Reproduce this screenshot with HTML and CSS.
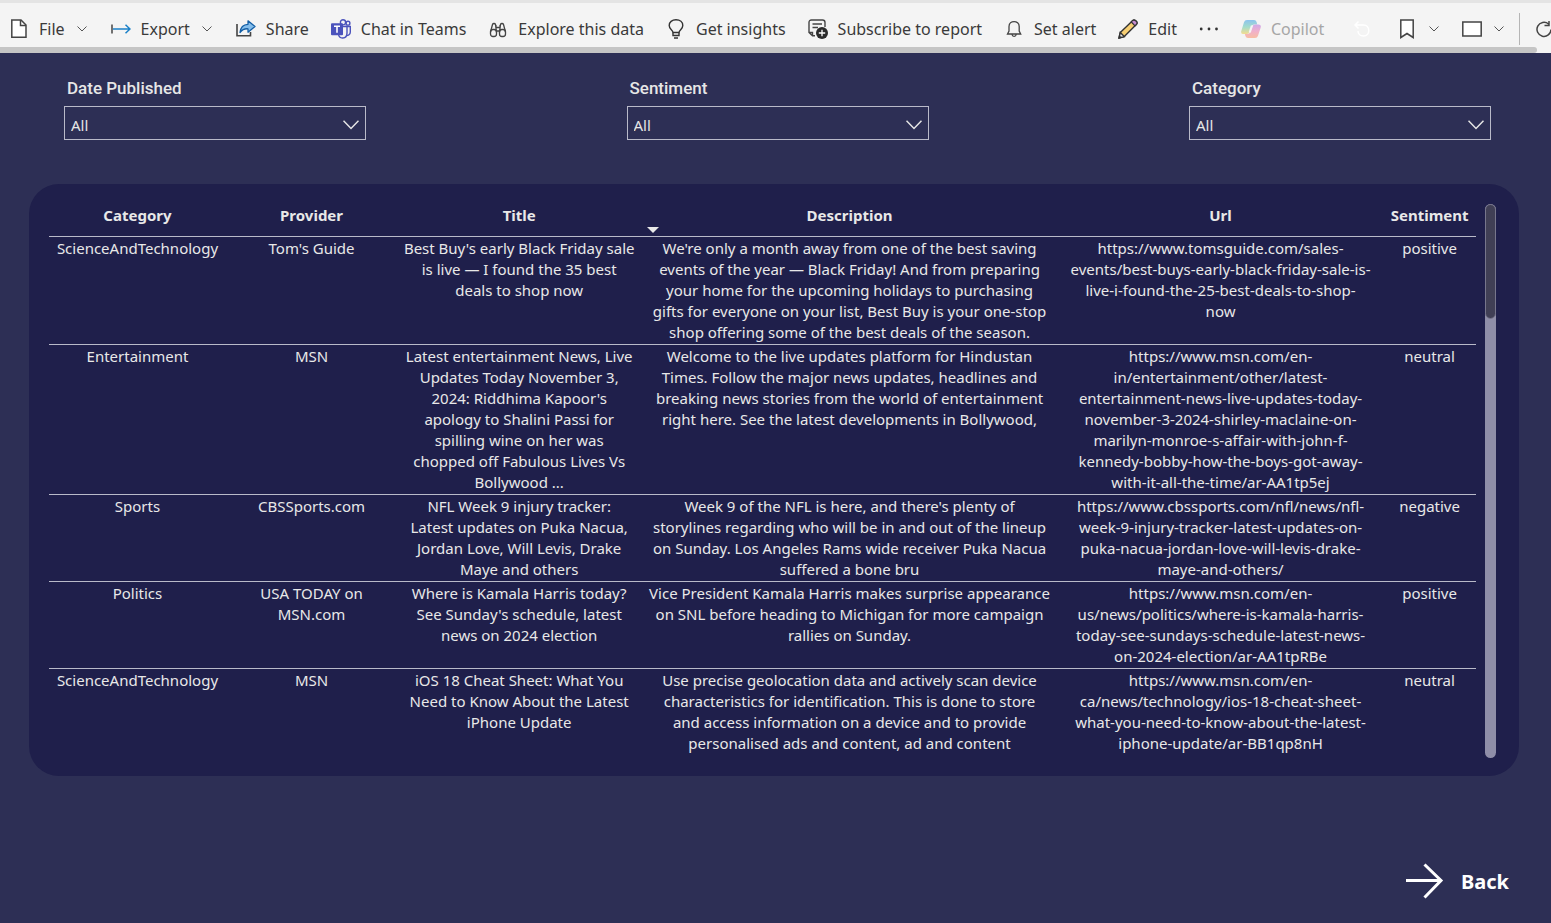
FILE: index.html
```html
<!DOCTYPE html>
<html lang="en">
<head>
<meta charset="utf-8">
<title>News report</title>
<link rel="stylesheet" href="styles.css">
</head>
<body>
<header class="toolbar">
  <nav class="actions" aria-label="Report actions">
    <button class="action menu" type="button">
      <svg class="icon" viewBox="0 0 20 20"><path d="M2.8 1h9.2l5 5v12.200H2.800z" fill="#fff" stroke="#444" stroke-width="1.500"/><path d="M11.500 1v5.500H17" fill="none" stroke="#444" stroke-width="1.500"/></svg>
      <span>File</span>
      <svg class="chev" viewBox="0 0 10 6"><path d="M.5.5 5 5 9.500.5"/></svg>
    </button>
    <button class="action menu" type="button">
      <svg class="icon" viewBox="0 0 20 20"><path d="M1 5.500v9" stroke="#444" stroke-width="1.500"/><path d="M2 10h17M14.500 5.700 19 10l-4.500 4.300" fill="none" stroke="#1a80c8" stroke-width="1.500"/></svg>
      <span>Export</span>
      <svg class="chev" viewBox="0 0 10 6"><path d="M.5.5 5 5 9.500.5"/></svg>
    </button>
    <button class="action" type="button">
      <svg class="icon" viewBox="0 0 20 20"><path d="M1 5v11.800h13.500V13" fill="none" stroke="#444" stroke-width="1.600"/><path d="M4 13.500C4.500 8.500 7.500 5.500 12 5.300V1.800l7 5.700-7 5.700V9.800C8.500 9.500 6 10.800 4 13.500z" fill="#84bdeb" stroke="#145fa6" stroke-width="1.300" stroke-linejoin="round"/></svg>
      <span>Share</span>
    </button>
    <button class="action" type="button">
      <svg class="icon" viewBox="0 0 20 20"><g fill="#f4f4f4" stroke="#4b53bc" stroke-width="1.400"><circle cx="17" cy="4.200" r="1.900"/><path d="M14 7.500h5.300v5.500c0 2.500-2 3.800-4.300 3.500"/><circle cx="12" cy="3.300" r="2.600"/><path d="M8 7.500h8v6.500c0 6.500-8 6.500-8.500 1z"/></g><rect y="4.200" width="12" height="12" rx="1" fill="#4b53bc"/><path d="M3 7.200h6M6 7.200v6.600" stroke="#fff" stroke-width="1.600"/></svg>
      <span>Chat in Teams</span>
    </button>
    <button class="action" type="button">
      <svg class="icon" viewBox="0 0 20 20" fill="none" stroke="#444" stroke-width="1.300"><rect x="2.500" y="10.500" width="6" height="7" rx="2.500"/><rect x="11.500" y="10.500" width="6" height="7" rx="2.500"/><path d="M2.500 13 4.500 5.500q.3-1 1.500-1t1.500 1l1 8M17.500 13l-2-7.500q-.3-1-1.500-1t-1.500 1l-1 8M8 8.500h4M8.500 12h3M8 6v5M12 6v5"/></svg>
      <span>Explore this data</span>
    </button>
    <button class="action" type="button">
      <svg class="icon" viewBox="0 0 20 20" fill="none" stroke="#333" stroke-width="1.400"><path d="M7 13.500C6.800 11 3.200 10 3.200 6.500 3.200 3 6 .8 10 .8s6.800 2.200 6.800 5.700c0 3.500-3.600 4.500-3.800 7z"/><path d="M7 13.500v3h6v-3M8 19h4"/></svg>
      <span>Get insights</span>
    </button>
    <button class="action" type="button">
      <svg class="icon" viewBox="0 0 20 20"><path d="M7 16.800H4.500L1 13.500V3.500q0-2.500 2.500-2.500h11Q17 1 17 3.500V8M4.500 17v-3.500H1M4.500 5H14M4.500 8.500H10" fill="none" stroke="#444" stroke-width="1.400"/><circle cx="14" cy="14" r="6" fill="#2b2b2b"/><path d="M14 10.800v6.400M10.800 14h6.400" stroke="#fff" stroke-width="1.300"/></svg>
      <span>Subscribe to report</span>
    </button>
    <button class="action" type="button">
      <svg class="icon" viewBox="0 0 20 20" fill="none" stroke="#444" stroke-width="1.300"><path d="M3.500 15h13.200l-1.500-3V7.500c0-6.500-10.200-6.500-10.200 0V12zM8 15.500c.3 2.500 3.900 2.500 4.200 0"/></svg>
      <span>Set alert</span>
    </button>
    <button class="action" type="button">
      <svg class="icon" viewBox="0 0 20 20"><path d="M1 19l1.300-5.500L14.500 1.700q1.500-1.500 3.500.3t.3 3.500L6.300 17.600z" fill="#f7cf73" stroke="#333" stroke-width="1.400" stroke-linejoin="round"/><path d="M13.300 2.900 14.500 1.700q1.500-1.500 3.500.3t.3 3.500L17 6.800z" fill="#c58bd0" stroke="#333" stroke-width="1.200"/><path d="M1 19l1.300-5.500 4 4.100z" fill="#e8e8e8" stroke="#333" stroke-width="1.400"/><path d="M1 19l.6-2.500 1.800 1.800z" fill="#333"/></svg>
      <span>Edit</span>
    </button>
    <button class="action more" type="button" aria-label="More options">
      <svg class="icon" viewBox="0 0 20 20" fill="#333"><circle cx="2.200" cy="10" r="1.400"/><circle cx="10" cy="10" r="1.400"/><circle cx="17.500" cy="10" r="1.400"/></svg>
    </button>
    <button class="action" type="button" disabled>
      <svg class="icon" viewBox="0 0 20 20"><defs><linearGradient id="cool" x1="0" y1="0" x2="0" y2="1"><stop offset="0" stop-color="#8cc3ee"/><stop offset=".5" stop-color="#a3dccb"/><stop offset="1" stop-color="#f4dc8f"/></linearGradient><linearGradient id="warm" x1="0" y1="0" x2="0" y2="1"><stop offset="0" stop-color="#cfa9ea"/><stop offset=".5" stop-color="#f0b0cb"/><stop offset="1" stop-color="#f8bda3"/></linearGradient></defs><path d="M6 1h7q2 0 2.600 2l.6 2.500h-3q-2 0-2.700 2L8.500 13q-.6 2-2.500 2H2.500Q-.5 15 .3 12L3 3.200Q3.700 1 6 1z" fill="url(#cool)"/><path d="M14 19H7q-2 0-2.600-2l-.5-2H6.500q2 0 2.700-2L11.500 7.500q.6-2 2.500-2h3.500q3 0 2.200 3L17 16.800Q16.300 19 14 19z" fill="url(#warm)"/><path d="M11 6.500 8.700 13.500" stroke="#f4f4f4" stroke-width="2.200"/></svg>
      <span>Copilot</span>
    </button>
  </nav>
  <div class="view-tools">
    <button class="action reset" type="button" aria-label="Reset" disabled>
      <svg class="icon" viewBox="0 0 20 20" fill="none" stroke="#fff" stroke-width="1.500"><path d="M3 6h8.500c7 0 7 11 0 11-3.500 0-5.500-2.500-5.500-5M6.500 2.500 3 6l3.500 3.500"/></svg>
    </button>
    <button class="action menu" type="button" aria-label="Bookmarks">
      <svg class="icon" viewBox="0 0 20 20"><path d="M3.800 1h12.400v17.500L10 14.500l-6.200 4z" fill="#fff" stroke="#444" stroke-width="1.500"/></svg>
      <svg class="chev" viewBox="0 0 10 6"><path d="M.5.5 5 5 9.500.5"/></svg>
    </button>
    <button class="action menu" type="button" aria-label="View">
      <svg class="icon" viewBox="0 0 20 20"><path d="M.8 3h18.400v14H.8z" fill="#fff" stroke="#444" stroke-width="1.500"/></svg>
      <svg class="chev" viewBox="0 0 10 6"><path d="M.5.5 5 5 9.500.5"/></svg>
    </button>
    <span class="divider"></span>
    <button class="action" type="button" aria-label="Refresh">
      <svg class="icon" viewBox="0 0 20 20" fill="none" stroke="#444" stroke-width="1.500"><path d="M13.500 5A7 7 0 1 0 16 10.500M14 2v4.500H9.500"/></svg>
    </button>
  </div>
</header>
<div class="toolbar-scroll"><div class="toolbar-thumb"></div></div>

<main class="report">
  <form class="filters">
    <div class="filter">
      <label for="date">Date Published</label>
      <div class="picker"><select id="date"><option>All</option></select><svg viewBox="0 0 16 10"><path d="M.5.8 8 8.500 15.500.8"/></svg></div>
    </div>
    <div class="filter">
      <label for="sentiment">Sentiment</label>
      <div class="picker"><select id="sentiment"><option>All</option></select><svg viewBox="0 0 16 10"><path d="M.5.8 8 8.500 15.500.8"/></svg></div>
    </div>
    <div class="filter">
      <label for="category">Category</label>
      <div class="picker"><select id="category"><option>All</option></select><svg viewBox="0 0 16 10"><path d="M.5.8 8 8.500 15.500.8"/></svg></div>
    </div>
  </form>

  <section class="panel">
    <table class="news">
      <colgroup><col class="c-category"><col class="c-provider"><col class="c-title"><col class="c-description"><col class="c-url"><col class="c-sentiment"></colgroup>
      <thead>
        <tr><th>Category</th><th>Provider</th><th>Title</th><th class="sorted">Description</th><th>Url</th><th>Sentiment</th></tr>
      </thead>
      <tbody>
        <tr>
          <td>ScienceAndTechnology</td><td>Tom's Guide</td>
          <td>Best Buy's early Black Friday sale<br>is live — I found the 35 best<br>deals to shop now</td>
          <td>We're only a month away from one of the best saving<br>events of the year — Black Friday! And from preparing<br>your home for the upcoming holidays to purchasing<br>gifts for everyone on your list, Best Buy is your one-stop<br>shop offering some of the best deals of the season.</td>
          <td>https://www.tomsguide.com/sales-<br>events/best-buys-early-black-friday-sale-is-<br>live-i-found-the-25-best-deals-to-shop-<br>now</td>
          <td>positive</td>
        </tr>
        <tr>
          <td>Entertainment</td><td>MSN</td>
          <td>Latest entertainment News, Live<br>Updates Today November 3,<br>2024: Riddhima Kapoor's<br>apology to Shalini Passi for<br>spilling wine on her was<br>chopped off Fabulous Lives Vs<br>Bollywood ...</td>
          <td>Welcome to the live updates platform for Hindustan<br>Times. Follow the major news updates, headlines and<br>breaking news stories from the world of entertainment<br>right here. See the latest developments in Bollywood,</td>
          <td>https://www.msn.com/en-<br>in/entertainment/other/latest-<br>entertainment-news-live-updates-today-<br>november-3-2024-shirley-maclaine-on-<br>marilyn-monroe-s-affair-with-john-f-<br>kennedy-bobby-how-the-boys-got-away-<br>with-it-all-the-time/ar-AA1tp5ej</td>
          <td>neutral</td>
        </tr>
        <tr>
          <td>Sports</td><td>CBSSports.com</td>
          <td>NFL Week 9 injury tracker:<br>Latest updates on Puka Nacua,<br>Jordan Love, Will Levis, Drake<br>Maye and others</td>
          <td>Week 9 of the NFL is here, and there's plenty of<br>storylines regarding who will be in and out of the lineup<br>on Sunday. Los Angeles Rams wide receiver Puka Nacua<br>suffered a bone bru</td>
          <td>https://www.cbssports.com/nfl/news/nfl-<br>week-9-injury-tracker-latest-updates-on-<br>puka-nacua-jordan-love-will-levis-drake-<br>maye-and-others/</td>
          <td>negative</td>
        </tr>
        <tr>
          <td>Politics</td><td>USA TODAY on<br>MSN.com</td>
          <td>Where is Kamala Harris today?<br>See Sunday's schedule, latest<br>news on 2024 election</td>
          <td>Vice President Kamala Harris makes surprise appearance<br>on SNL before heading to Michigan for more campaign<br>rallies on Sunday.</td>
          <td>https://www.msn.com/en-<br>us/news/politics/where-is-kamala-harris-<br>today-see-sundays-schedule-latest-news-<br>on-2024-election/ar-AA1tpRBe</td>
          <td>positive</td>
        </tr>
        <tr>
          <td>ScienceAndTechnology</td><td>MSN</td>
          <td>iOS 18 Cheat Sheet: What You<br>Need to Know About the Latest<br>iPhone Update</td>
          <td>Use precise geolocation data and actively scan device<br>characteristics for identification. This is done to store<br>and access information on a device and to provide<br>personalised ads and content, ad and content</td>
          <td>https://www.msn.com/en-<br>ca/news/technology/ios-18-cheat-sheet-<br>what-you-need-to-know-about-the-latest-<br>iphone-update/ar-BB1qp8nH</td>
          <td>neutral</td>
        </tr>
      </tbody>
    </table>
    <div class="track"><div class="thumb"></div></div>
  </section>

  <footer class="footer">
    <a class="back" href="#">
      <svg viewBox="0 0 38 36"><path d="M0 17.500h35M18.500 1.500 35 17.500 18.500 34.500"/></svg>
      <span>Back</span>
    </a>
  </footer>
</main>
</body>
</html>
```
FILE: styles.css
```css
* { box-sizing: border-box; }
body {
  margin: 0;
  min-height: 100vh;
  display: flex;
  flex-direction: column;
  overflow-x: hidden;
  background: #2d2f55;
  font-family: "Segoe UI", "Noto Sans", sans-serif;
}
button, select { font: inherit; color: inherit; }

.toolbar {
  display: flex;
  align-items: center;
  justify-content: space-between;
  height: 47px;
  padding: 7px 0 0 9px;
  overflow: hidden;
  background: #f4f4f4;
  border-top: 3px solid #e4e4e4;
  color: #3a3a3a;
  font-size: 16px;
  line-height: 24px;
}
.actions, .view-tools { display: flex; align-items: center; }
.actions { gap: 22px; }
.view-tools { flex: none; gap: 21px; margin-right: -4px; }
.action {
  display: flex;
  align-items: center;
  gap: 10px;
  padding: 0;
  border: 0;
  background: none;
  white-space: nowrap;
}
.action:disabled { color: #a6a6a6; }
.reset { margin-right: 4px; }
.icon { width: 20px; height: 20px; flex: none; }
.chev { width: 10px; height: 6px; margin: 0 2px; flex: none; fill: none; stroke: #555; }
.divider { width: 1px; height: 32px; margin: 0 -6px 0 -8px; background: #b5b5b5; }
.toolbar-scroll { height: 6px; background: #f4f4f4; }
.toolbar-thumb { height: 6px; margin-right: 14px; background: #c5c5c5; border-radius: 0 3px 3px 0; }

.report { flex: 1; display: flex; flex-direction: column; }
.filters {
  display: flex;
  justify-content: space-between;
  padding: 24px 60px 0 64px;
  color: #e6e6e6;
}
.filter { width: 302px; }
.filter label {
  display: block;
  padding-left: 3px;
  font: 500 17px/22px Roboto, sans-serif;
}
.picker { position: relative; margin-top: 7px; }
.picker select {
  display: block;
  width: 100%;
  height: 34px;
  padding: 3px 6px 0;
  appearance: none;
  background: transparent;
  border: 1px solid #b9bac9;
  border-radius: 0;
  font-size: 15px;
}
.picker svg {
  position: absolute;
  right: 7px;
  top: 14px;
  width: 16px;
  height: 10px;
  fill: none;
  stroke: #e6e6e6;
  stroke-width: 1.5;
  pointer-events: none;
}

.panel {
  display: flex;
  gap: 9px;
  margin: 44px 32px 0 29px;
  padding: 12px 23px 18px 20px;
  border-radius: 30px;
  background: #1f1f4b;
}
.news {
  flex: 1;
  table-layout: fixed;
  border-collapse: collapse;
  color: #e8e8e8;
  font-size: 15px;
  line-height: 21px;
  text-align: center;
  white-space: nowrap;
}
.c-category { width: 12.4%; }
.c-provider { width: 12%; }
.c-title { width: 17.1%; }
.c-description { width: 29.2%; }
.c-url { width: 22.8%; }
.c-sentiment { width: 6.5%; }
.news th { height: 40px; padding: 0; font-weight: 700; }
.news td { padding: 1px 0; vertical-align: top; }
.news tr { border-bottom: 1px solid #b9bac9; }
.news tbody tr:last-child { border-bottom: 0; }
.news tbody tr:last-child td { padding-bottom: 4px; }
.sorted { position: relative; }
.sorted::before {
  content: "";
  position: absolute;
  left: 6px;
  bottom: 3px;
  border: 6px solid transparent;
  border-top-color: #e8e8e8;
  border-bottom: 0;
}
.track { width: 11px; margin-top: 8px; border-radius: 6px; background: #8f8ea8; }
.thumb { height: 115px; border: 1px solid #77768c; border-radius: 6px; background: #403f55; }

.footer { display: flex; justify-content: flex-end; margin-top: auto; padding: 0 42px 24px 0; }
.back {
  display: flex;
  align-items: center;
  gap: 17px;
  color: #fff;
  font-size: 20px;
  font-weight: 700;
  text-decoration: none;
}
.back svg { width: 38px; height: 36px; fill: none; stroke: #fff; stroke-width: 3; }
```
